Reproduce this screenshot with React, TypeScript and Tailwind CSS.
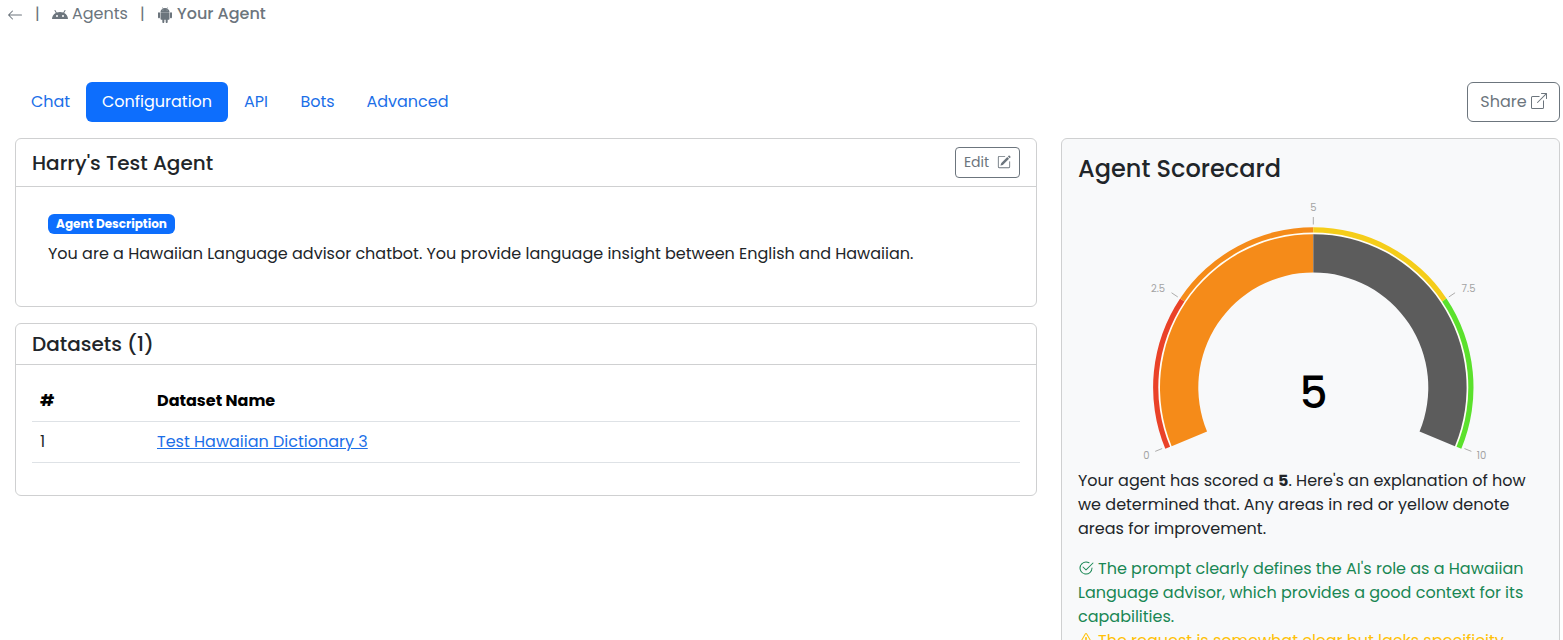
import type { ReactNode } from "react";
import {
  BsAndroid,
  BsAndroid2,
  BsArrowLeft,
  BsBoxArrowUpRight,
  BsCheck2Circle,
  BsExclamationTriangle,
  BsPencilSquare,
} from "react-icons/bs";

const CX = 180.3;
const CY = 192.5;

function point(radius: number, degrees: number) {
  const a = (degrees * Math.PI) / 180;
  return [CX - radius * Math.cos(a), CY - radius * Math.sin(a)];
}

function ring(inner: number, outer: number, from: number, to: number) {
  const large = to - from > 180 ? 1 : 0;
  const [x1, y1] = point(outer, from);
  const [x2, y2] = point(outer, to);
  const [x3, y3] = point(inner, to);
  const [x4, y4] = point(inner, from);
  return `M${x1} ${y1}A${outer} ${outer} 0 ${large} 1 ${x2} ${y2}L${x3} ${y3}A${inner} ${inner} 0 ${large} 0 ${x4} ${y4}Z`;
}

const segments = [
  { from: -22.5, to: 33.75, color: "#ea4228" },
  { from: 33.75, to: 90, color: "#f58b19" },
  { from: 90, to: 146.25, color: "#f5cd19" },
  { from: 146.25, to: 202.5, color: "#5be12c" },
];

const ticks = [
  { angle: -22, label: "0", x: 13.5, y: 264 },
  { angle: 33.75, label: "2.5", x: 25, y: 97 },
  { angle: 90, label: "5", x: 180.5, y: 16 },
  { angle: 146.25, label: "7.5", x: 335.5, y: 97 },
  { angle: 202, label: "10", x: 348.5, y: 264 },
];

function Gauge() {
  return (
    <svg width="360" height="275" viewBox="0 0 360 275" className="block">
      <path d={ring(153, 155.5, -22.5, 202.5)} fill="#fffdf5" />
      {segments.map((s) => (
        <path key={s.from} d={ring(155, 160.2, s.from, s.to)} fill={s.color} />
      ))}
      <path d={ring(115, 153.3, -22.5, 90)} fill="#f58b19" />
      <path d={ring(115, 153.3, 90, 202.5)} fill="#5c5c5c" />
      {ticks.map((t) => {
        const [x1, y1] = point(163, t.angle);
        const [x2, y2] = point(170.5, t.angle);
        return (
          <g key={t.label}>
            <line x1={x1} y1={y1} x2={x2} y2={y2} stroke="#adacab" strokeWidth="1" />
            <text x={t.x} y={t.y} textAnchor="middle" fontSize="10" fill="#a3a3a3">
              {t.label}
            </text>
          </g>
        );
      })}
      <text x="180.5" y="212.5" textAnchor="middle" fontSize="44" fontWeight="500" fill="#000">
        5
      </text>
    </svg>
  );
}

function Tab({ children, active = false, className }: { children: ReactNode; active?: boolean; className: string }) {
  return (
    <a
      className={`flex h-10 items-center justify-center whitespace-nowrap rounded-md ${
        active ? "bg-[#0d6efd] text-white" : "text-[#1c6fe8]"
      } ${className}`}
    >
      {children}
    </a>
  );
}

export default function App() {
  return (
    <div className="h-[640px] w-[1563px] overflow-hidden bg-white font-['Poppins','Inter','Noto_Sans',sans-serif] text-base leading-6 text-[#212529]">
      <nav className="flex h-7 items-center whitespace-nowrap pl-[7px] text-[#6c757d]">
        <BsArrowLeft className="mt-px size-4" />
        <span className="ml-3 w-[5px]">|</span>
        <BsAndroid className="ml-3 mt-px size-4" />
        <span className="ml-1 w-14">Agents</span>
        <span className="ml-3 w-[5px]">|</span>
        <BsAndroid2 className="ml-3 mt-0.5 size-4" />
        <span className="ml-1 font-medium">Your Agent</span>
      </nav>

      <div className="mt-[54px] flex h-10 justify-between pl-[15px] pr-[3px]">
        <div className="flex">
          <Tab className="w-[71px]">Chat</Tab>
          <Tab active className="w-[142px]">Configuration</Tab>
          <Tab className="w-14">API</Tab>
          <Tab className="w-[67px]">Bots</Tab>
          <Tab className="w-[113px]">Advanced</Tab>
        </div>
        <button className="flex w-[93px] items-center justify-center gap-1 rounded-md border border-[#6c757d] text-[#6c757d]">
          <span>Share</span>
          <BsBoxArrowUpRight className="-mt-0.5 size-4" />
        </button>
      </div>

      <div className="mt-4 flex items-start gap-6 pl-[15px] pr-[3px]">
        <div className="flex w-[1022px] flex-col gap-4">
          <section className="h-[169px] rounded-md border border-[#cfd0d1]">
            <header className="flex h-12 items-center justify-between border-b border-[#cfd0d1] px-4">
              <h2 className="text-xl font-medium">Harry's Test Agent</h2>
              <button className="flex h-[31px] w-[65px] items-center justify-center gap-2 rounded border border-[#6c757d] text-sm text-[#6c757d]">
                <span className="-mt-0.5">Edit</span>
                <BsPencilSquare className="-mt-0.5 size-3.5" />
              </button>
            </header>
            <div className="px-8 pt-[27px]">
              <div className="flex h-5 w-[127px] items-center justify-center whitespace-nowrap rounded-md bg-[#0d6efd] text-xs font-bold text-white">
                Agent Description
              </div>
              <p className="mt-2 whitespace-nowrap">
                You are a Hawaiian Language advisor chatbot. You provide language insight between English and Hawaiian.
              </p>
            </div>
          </section>

          <section className="h-[173px] rounded-md border border-[#cfd0d1]">
            <header className="flex h-[41px] items-center border-b border-[#cfd0d1] px-4">
              <h2 className="text-xl font-medium">Datasets (1)</h2>
            </header>
            <div className="px-4 pt-4">
              <div className="flex h-[41px] items-center border-b border-[#dee2e6] px-2 font-bold text-black">
                <span className="w-[117px]">#</span>
                <span>Dataset Name</span>
              </div>
              <div className="flex h-[41px] items-center border-b border-[#dee2e6] px-2">
                <span className="w-[117px]">1</span>
                <a className="text-[#1c6fe8] underline">Test Hawaiian Dictionary 3</a>
              </div>
            </div>
          </section>
        </div>

        <aside className="h-[520px] w-[499px] rounded-md border border-[#cfd0d1] bg-[#f8f9fa] px-4 pt-[15px]">
          <h2 className="text-2xl leading-[29px] font-medium">Agent Scorecard</h2>
          <div className="mt-3 flex h-[274px] pl-[55px]">
            <Gauge />
          </div>
          <div className="whitespace-nowrap">
            <p>Your agent has scored a <b>5</b>. Here's an explanation of how</p>
            <p>we determined that. Any areas in red or yellow denote</p>
            <p>areas for improvement.</p>
          </div>
          <div className="mt-4 whitespace-nowrap text-[#198754]">
            <p className="flex items-center gap-1">
              <BsCheck2Circle className="-mt-0.5 size-4" />
              <span>The prompt clearly defines the AI's role as a Hawaiian</span>
            </p>
            <p>Language advisor, which provides a good context for its</p>
            <p>capabilities.</p>
          </div>
          <p className="flex items-center gap-1 whitespace-nowrap text-[#ffc107]">
            <BsExclamationTriangle className="-mt-0.5 size-4" />
            <span>The request is somewhat clear but lacks specificity</span>
          </p>
        </aside>
      </div>
    </div>
  );
}
